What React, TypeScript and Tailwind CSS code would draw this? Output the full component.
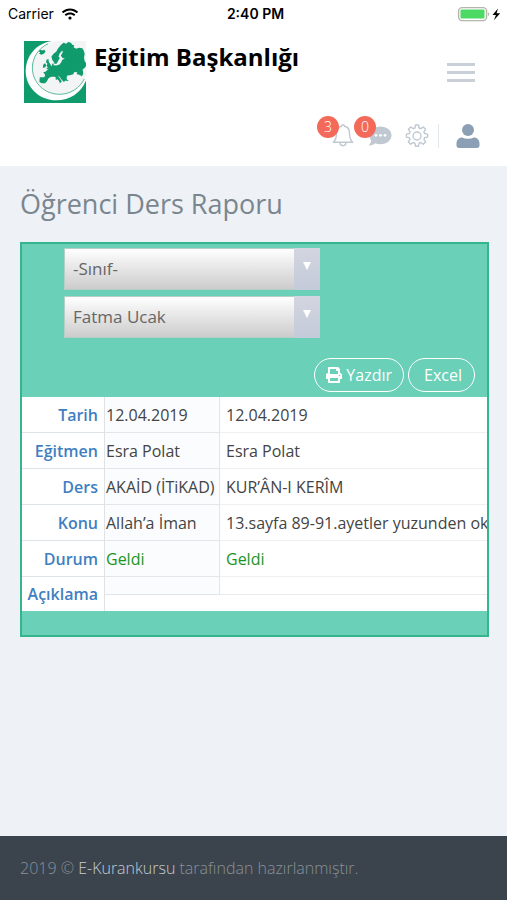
import React, { useState } from 'react';
import { FaWifi, FaPrint, FaUser } from 'react-icons/fa';

const rows = [
  { label: 'Tarih', cells: ['12.04.2019', '12.04.2019'] },
  { label: 'Eğitmen', cells: ['Esra Polat', 'Esra Polat'] },
  { label: 'Ders', cells: ['AKAİD (İTiKAD)', 'KUR’ÂN-I KERÎM'] },
  { label: 'Konu', cells: ['Allah’a İman', '13.sayfa 89-91.ayetler yuzunden ok'] },
  { label: 'Durum', cells: ['Geldi', 'Geldi'], green: true },
];

function StatusBar() {
  return (
    <div className="grid grid-cols-3 items-center h-7 pl-2 pr-1 font-['Inter',sans-serif] text-sm text-black">
      <div className="flex items-center gap-2">
        <span>Carrier</span>
        <FaWifi className="h-4 w-4" />
      </div>
      <span className="text-center font-semibold">2:40 PM</span>
      <div className="flex items-center justify-end">
        <svg className="h-4 w-[46px]" viewBox="0 0 46 16" aria-hidden="true">
          <rect x="1.6" y="1.6" width="28" height="13" rx="3.5" fill="#fff" stroke="#b5b5b0" strokeWidth="1.4" />
          <rect x="3.5" y="3.5" width="24" height="9" rx="1" fill="#4cd964" />
          <path d="M31 6.2c1.6.4 1.6 3.4 0 3.800z" fill="#b5b5b0" />
          <path d="M41 2.500 35.500 9h3.400l-2 5.200L43.200 7.200h-3.600z" fill="#000" />
        </svg>
      </div>
    </div>
  );
}

function Logo() {
  return (
    <svg className="h-[62px] w-[62px] shrink-0" viewBox="0 0 185 185" role="img" aria-label="Logo">
      <path d="M0 0h185v185H0z" fill="#0f9b6c" />
      <path d="M84 0h101v118c-14 36-48 59-89 59C46 177 5 138 5 90 5 44 38 6 84 0z" fill="#fff" />
      <path d="M76 6 100 0h85v100c-12 34-42 59-78 59-46 0-82-36-82-80C25 48 44 20 76 6z" fill="#f3f4f5" />
      <path d="M72 8C43 22 25 49 25 80c0 44 36 79 81 79 32 0 60-18 74-46" fill="none" stroke="#0f9b6c" strokeWidth="2" />
      <g fill="#0f9b6c">
        <path d="M44 30l5-4 6 2 6-2 3 5-4 6-8 4-7-3 3-4z" />
        <path d="M67 56l6-2 1 8 5 8 3 6-3 6-13 2 5-6-4-4 3-6-4-4zM59 68l5-1 2 6-3 6-7 1 1-7z" />
        <path d="M84 56l-2-10 6-8 8-6 6-10 8-10 8-7 8 3 6-5 8 2 4 6 6 2-2 6 8 4 8-3 10 2 4 6 3 10-2 12 2 10 6 10-4 8-8 7 2 12-4 8-10-5-6-1 2-5-8-2-4 7-10 3-8 1-2 8 4 8-7-1-5 4-8-8-5-7-5-4 8 12 4 6-6 5-2-6-8-10-6-3-10 0-8 4-4 8-6 7-10 0-7-4 1-14 14 0 2-8-6-6 8-3 6-6 8-6 4-6 2-6 4 0-1 5 8 1 10-3 6-8 2-6 8-3-8-3-4-7 6-10-2-5-8 10-3 8 4 5-5 8-4 8-6 2-4-8z" />
        <path d="M95 109l5 1-1 6-5-2zM126 116l8 2-6 2z" />
      </g>
    </svg>
  );
}

function SelectBox({ label, options }: { label: string; options: string[] }) {
  return (
    <div className="relative w-64 max-w-full">
      <select
        aria-label={label}
        className="block h-[42px] w-full appearance-none border border-[#b5cfc8] bg-gradient-to-b from-white to-[#cccccc] pl-2 pr-8 text-[17px] text-[#666]"
      >
        {options.map(o => (
          <option key={o}>{o}</option>
        ))}
      </select>
      <span className="pointer-events-none absolute inset-y-0 right-0 flex w-[26px] justify-center bg-gradient-to-b from-[#d3d6e0] to-[#c4cad9] pt-[14px]">
        <svg className="h-2 w-2" viewBox="0 0 8 8" aria-hidden="true">
          <path d="M0 0h8L4 8z" fill="#fff" />
        </svg>
      </span>
    </div>
  );
}

function Badge({ count }: { count: number }) {
  return (
    <span className="absolute -left-[14px] -top-2 flex h-[22px] w-[22px] items-center justify-center rounded-full bg-[#f36a5a] text-sm font-light text-white">
      {count}
    </span>
  );
}

function TopMenu() {
  return (
    <div className="flex items-center justify-end gap-[13px] h-11 pr-[11px]">
      <button aria-label="Bildirimler" className="relative h-6 w-6">
        <svg className="h-6 w-6" viewBox="0 0 24 24" fill="none" stroke="#c0c9d1" strokeWidth="1.4" aria-hidden="true">
          <path d="M10.500 2.200a1.500 1.500 0 0 1 3 0c3.400.6 5 3.400 5 6.800 0 4.800.8 7.200 3.200 9.300H2.300c2.400-2.100 3.200-4.500 3.200-9.300 0-3.400 1.600-6.200 5-6.800z" strokeLinejoin="round" />
          <path d="M9 18.600c0 4.200 6 4.200 6 0" />
        </svg>
        <Badge count={3} />
      </button>
      <button aria-label="Mesajlar" className="relative h-6 w-6">
        <svg className="h-6 w-6" viewBox="0 0 24 24" aria-hidden="true">
          <path d="M12.500 2.500c6.300 0 11 3.700 11 8.800s-4.700 9-11 9c-2 0-3.800-.4-5.300-1.100C5.500 20.800 3 21.800.5 21.300c1.800-1.400 2.600-3.200 2.700-4.800-1.100-1.500-1.700-3.200-1.700-5.200 0-5.100 4.700-8.800 11-8.800z" fill="#c0c9d1" />
          <g fill="#fff">
            <circle cx="8" cy="11.300" r="1.400" />
            <circle cx="12.500" cy="11.300" r="1.400" />
            <circle cx="17" cy="11.300" r="1.400" />
          </g>
        </svg>
        <Badge count={0} />
      </button>
      <button aria-label="Ayarlar" className="h-6 w-6">
        <svg className="h-6 w-6" viewBox="0 0 24 24" fill="none" stroke="#c0c9d1" strokeWidth="1.400" strokeLinejoin="round" aria-hidden="true">
          <circle cx="12" cy="12" r="4" />
          <path d="M10.500 1h3l.6 3 1.700.7 2.500-1.700 2.300 2.300-1.700 2.500.7 1.700 3 .6v3l-3 .6-.7 1.700 1.700 2.500-2.300 2.300-2.500-1.700-1.700.7-.6 3h-3l-.6-3-1.700-.7-2.500 1.700-2.300-2.300 1.700-2.500-.7-1.700-3-.6v-3l3-.6.7-1.700-1.700-2.500L5.700 3l2.500 1.700 1.700-.7z" />
        </svg>
      </button>
      <span className="-ml-1 h-6 w-px bg-[#e3e8ec]" />
      <button aria-label="Profil" className="ml-1 h-6 w-6">
        <svg className="h-6 w-6" viewBox="0 0 24 24" fill="#8ba0b4" aria-hidden="true">
          <circle cx="12" cy="6" r="6" />
          <path d="M6 13.500c3.800 1.800 8.200 1.800 12 0 3.200 0 5.500 2.500 5.500 6v2c0 1.500-1 2.500-2.500 2.500H3C1.500 24 .5 23 .5 21.500v-2c0-3.500 2.300-6 5.500-6z" />
        </svg>
      </button>
    </div>
  );
}

export default function App() {
  const [menuOpen, setMenuOpen] = useState(false);

  return (
    <div className="flex min-h-screen flex-col bg-[#eef1f5] font-['Open_Sans',sans-serif] text-base text-[#444]">
      <header className="bg-white pb-2">
        <StatusBar />
        <div className="flex items-start px-6 pt-[13px]">
          <Logo />
          <span className="ml-2 text-2xl font-bold text-black">Eğitim Başkanlığı</span>
          <button
            aria-label="Menü"
            aria-expanded={menuOpen}
            onClick={() => setMenuOpen(!menuOpen)}
            className="ml-auto mr-2 mt-[18px] flex flex-col gap-[5px] py-1"
          >
            <span className="h-[3px] w-7 bg-[#c9d0d7]" />
            <span className="h-[3px] w-7 bg-[#c9d0d7]" />
            <span className="h-[3px] w-7 bg-[#c9d0d7]" />
          </button>
        </div>
        <div className="px-4 pt-[11px]">
          <TopMenu />
        </div>
      </header>

      <main className="flex-1 px-5 pt-4">
        <h1 className="h-[60px] pt-1 text-[27px] leading-9 text-[#7a868f]">Öğrenci Ders Raporu</h1>

        <section className="mr-[-2px] border-2 border-[#35b58d] bg-[#6ad0b7]">
          <div className="flex flex-col gap-[6px] pl-[42px] pr-3 pt-1">
            <SelectBox label="Sınıf" options={['-Sınıf-']} />
            <SelectBox label="Öğrenci" options={['Fatma Ucak']} />
          </div>
          <div className="flex justify-end gap-1 pb-[5px] pr-3 pt-5">
            <button className="flex h-[34px] items-center gap-1 rounded-full border border-white px-[11px] text-white">
              <FaPrint className="h-4 w-4" />
              Yazdır
            </button>
            <button className="h-[34px] rounded-full border border-white pl-[15px] pr-3 text-white">Excel</button>
          </div>

          {/* Report table */}
          <div className="overflow-hidden bg-white">
            <table className="w-full table-fixed border-separate border-spacing-0 whitespace-nowrap">
              <tbody>
                {rows.map(row => (
                  <tr key={row.label} className={row.green ? 'h-9 text-[#1a951f]' : 'h-9'}>
                    <th scope="row" className="w-[83px] border-b border-r border-[#dde3e6] pr-[6px] text-right font-semibold text-[#3f7fc1]">
                      {row.label}
                    </th>
                    <td className="w-[115px] border-b border-r border-[#e2e6e9] bg-[#fafcfd] pl-px">{row.cells[0]}</td>
                    <td className="border-b border-[#edf0f2] pl-[6px]">{row.cells[1]}</td>
                  </tr>
                ))}
                <tr className="h-[18px]">
                  <th scope="row" rowSpan={2} className="border-r border-[#dde3e6] pr-[6px] text-right font-semibold text-[#3f7fc1]">
                    Açıklama
                  </th>
                  <td className="border-b border-r border-[#e2e6e9] bg-[#fafcfd]" />
                  <td className="border-b border-[#e7ebee]" />
                </tr>
                <tr className="h-4">
                  <td colSpan={2} />
                </tr>
              </tbody>
            </table>
          </div>
          <div className="h-6" />
        </section>
      </main>

      <footer className="bg-[#3b434c] px-5 py-5 font-light text-[#89919a]">
        2019 © <a href="#" className="text-[#c4cbd2]">E-Kurankursu</a> tarafından hazırlanmıştır.
      </footer>
    </div>
  );
}
